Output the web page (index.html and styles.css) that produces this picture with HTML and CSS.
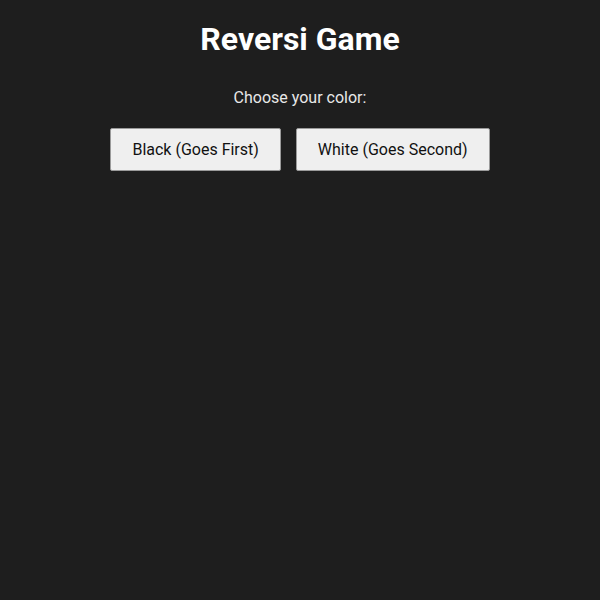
FILE: index.html
```html
<!DOCTYPE html>
<html lang="en">

<head>
    <meta charset="UTF-8">
    <meta name="viewport" content="width=device-width, initial-scale=1">
    <title>Reversi Game</title>
    <link rel="stylesheet" href="styles.css">
</head>

<body>

    <h1 class="title">Reversi Game</h1>

    <div class="color_select" id="colorSelect">
        <p class="prompt">Choose your color:</p>
        <div class="choices">
            <button class="choice" data-color="black">Black (Goes First)</button>
            <button class="choice" data-color="white">White (Goes Second)</button>
        </div>
    </div>

</body>

</html>
```

FILE: styles.css
```css
body {
    background: #1e1e1e;
    color: #ffffff;
    font-family: Roboto, 'Noto Sans', sans-serif;
    margin: 0;
    padding: 20px;
    display: flex;
    flex-direction: column;
    align-items: center;
}

.title {
    font-size: 2rem;
    font-weight: 700;
    margin: 0 0 30px;
}

.color_select {
    text-align: center;
}

.prompt {
    font-size: 1rem;
    margin: 0 0 21px;
    color: #e8e8e8;
}

.choices {
    display: flex;
    gap: 15px;
    justify-content: center;
}

.choice {
    font-family: inherit;
    font-size: 1rem;
    padding: 11px 21px;
    background: #efefef;
    color: #111111;
    border: 1px solid #9a9a9a;
    border-radius: 2px;
    cursor: pointer;
}

.choice:hover {
    background: #e0e0e0;
}
```
